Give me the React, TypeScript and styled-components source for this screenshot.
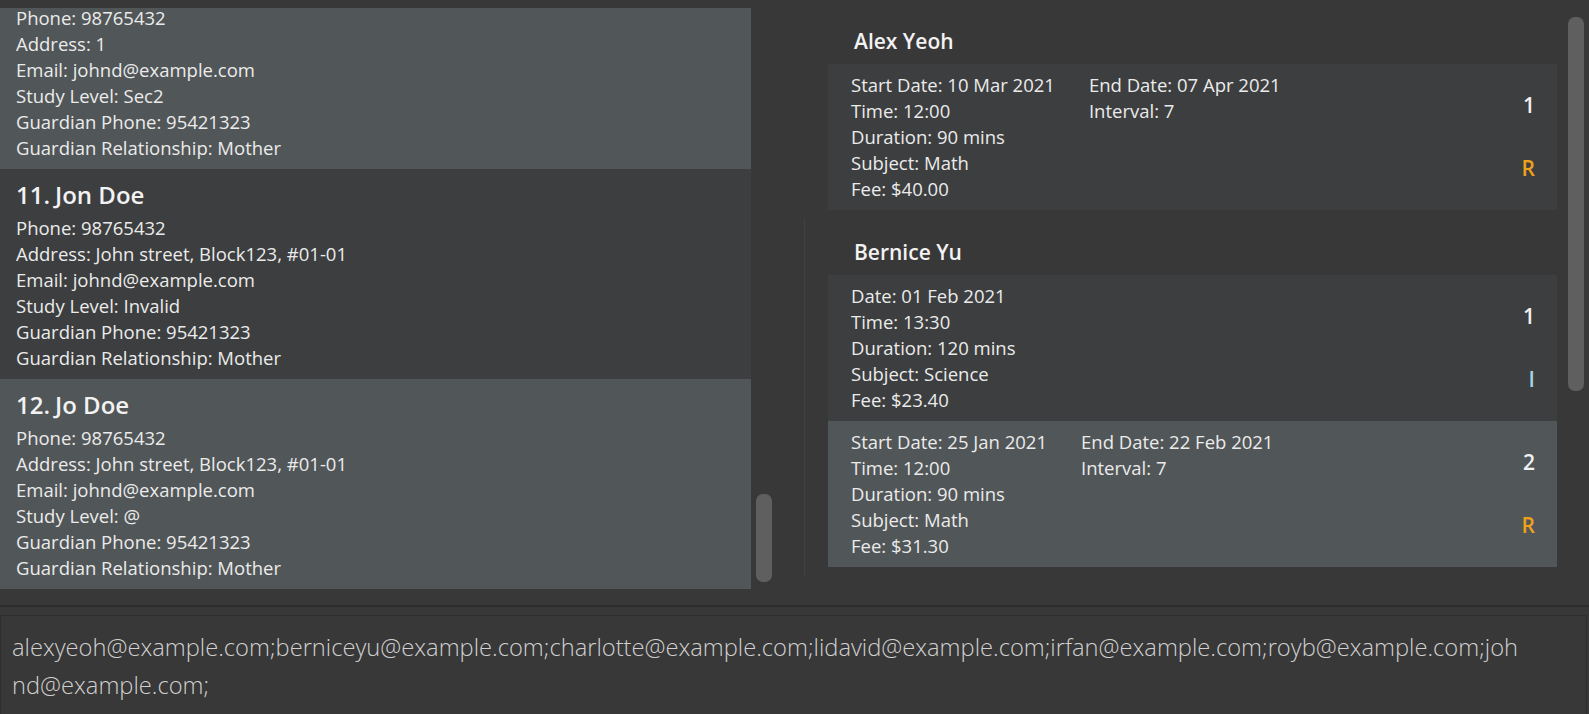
import * as React from 'react'
import styled, { createGlobalStyle } from 'styled-components'

const GlobalStyle = createGlobalStyle`
  html, body {
    margin: 0;
    padding: 0;
    background: #383838;
  }
  body {
    font-family: 'Open Sans', 'Noto Sans', sans-serif;
    color: #ececec;
    overflow: hidden;
  }
`

const Window = styled.div`
  height: 714px;
  display: flex;
  flex-direction: column;
  background: #383838;
`

const Main = styled.div`
  display: flex;
  height: 605px;
  padding-top: 8px;
  box-sizing: border-box;
`

const LeftPane = styled.div`
  display: flex;
  width: 804px;
  flex-shrink: 0;
`

const PersonList = styled.div`
  width: 751px;
  overflow: hidden;
  display: flex;
  flex-direction: column;
`

const PersonCard = styled.div<{ $odd: boolean; $clipped?: boolean }>`
  background: ${p => (p.$odd ? '#515658' : '#3c3e3f')};
  padding: ${p => (p.$clipped ? '0' : '10px')} 16px 8px 16px;
  margin-top: ${p => (p.$clipped ? '-3px' : '0')};
  flex-shrink: 0;
`

const PersonName = styled.div`
  display: flex;
  font-size: 24px;
  font-weight: 600;
  line-height: 32px;
  margin-bottom: 4px;
  color: #f2f2f2;
`

const Index = styled.span`
  width: 39px;
`

const Field = styled.div`
  font-size: 18.5px;
  line-height: 26px;
  color: #ebebeb;
  white-space: nowrap;
`

const ScrollTrack = styled.div<{ $left: number }>`
  width: 16px;
  margin-left: ${p => p.$left}px;
  flex-shrink: 0;
`

const Thumb = styled.div<{ $top: number; $height: number }>`
  margin-top: ${p => p.$top}px;
  height: ${p => p.$height}px;
  border-radius: 7px;
  background: #5f5f5f;
`

const RightPane = styled.div`
  flex: 1;
  display: flex;
  padding-right: 5px;
`

const LessonList = styled.div`
  flex: 1;
  display: flex;
  flex-direction: column;
`

const Group = styled.div<{ $divider?: boolean }>`
  padding: 0 5px 9px 23px;
  border-left: 1px solid ${p => (p.$divider ? '#414141' : 'transparent')};
`

const GroupTitle = styled.div`
  font-size: 21px;
  font-weight: 600;
  line-height: 28px;
  padding: 19px 0 9px 26px;
  color: #f2f2f2;
`

const LessonCard = styled.div<{ $odd: boolean }>`
  display: flex;
  background: ${p => (p.$odd ? '#515658' : '#3c3e3f')};
  padding: 8px 22px 8px 23px;
`

const Columns = styled.div`
  flex: 1;
  display: flex;
  gap: 34px;
`

const Side = styled.div`
  display: flex;
  flex-direction: column;
  justify-content: space-between;
  align-items: flex-end;
  padding: 19px 0 20px;
`

const SideText = styled.div<{ $kind?: 'R' | 'I' }>`
  font-size: 21px;
  font-weight: 600;
  line-height: 28px;
  color: ${p => (p.$kind === 'R' ? '#eea21c' : p.$kind === 'I' ? '#a9d3e3' : '#f0f0f0')};
`

const Divider = styled.div`
  height: 2px;
  background: #2c2c2c;
  margin-bottom: 8px;
`

const ResultBox = styled.div`
  flex: 1;
  margin-right: 2px;
  border: 1px solid #2e2e2e;
  border-bottom: none;
  padding: 12px 11px 0;
  font-size: 23.7px;
  font-weight: 300;
  line-height: 38px;
  color: #d0d0d0;
  white-space: nowrap;
`

type Person = {
  index: number
  name?: string
  fields: string[]
}

const persons: Person[] = [
  {
    index: 10,
    fields: [
      'Phone: 98765432',
      'Address: 1',
      'Email: johnd@example.com',
      'Study Level: Sec2',
      'Guardian Phone: 95421323',
      'Guardian Relationship: Mother',
    ],
  },
  {
    index: 11,
    name: 'Jon Doe',
    fields: [
      'Phone: 98765432',
      'Address: John street, Block123, #01-01',
      'Email: johnd@example.com',
      'Study Level: Invalid',
      'Guardian Phone: 95421323',
      'Guardian Relationship: Mother',
    ],
  },
  {
    index: 12,
    name: 'Jo Doe',
    fields: [
      'Phone: 98765432',
      'Address: John street, Block123, #01-01',
      'Email: johnd@example.com',
      'Study Level: @',
      'Guardian Phone: 95421323',
      'Guardian Relationship: Mother',
    ],
  },
]

type Lesson = {
  main: string[]
  extra?: string[]
  kind: 'R' | 'I'
}

const groups: { student: string; lessons: Lesson[] }[] = [
  {
    student: 'Alex Yeoh',
    lessons: [
      {
        main: ['Start Date: 10 Mar 2021', 'Time: 12:00', 'Duration: 90 mins', 'Subject: Math', 'Fee: $40.00'],
        extra: ['End Date: 07 Apr 2021', 'Interval: 7'],
        kind: 'R',
      },
    ],
  },
  {
    student: 'Bernice Yu',
    lessons: [
      {
        main: ['Date: 01 Feb 2021', 'Time: 13:30', 'Duration: 120 mins', 'Subject: Science', 'Fee: $23.40'],
        kind: 'I',
      },
      {
        main: ['Start Date: 25 Jan 2021', 'Time: 12:00', 'Duration: 90 mins', 'Subject: Math', 'Fee: $31.30'],
        extra: ['End Date: 22 Feb 2021', 'Interval: 7'],
        kind: 'R',
      },
    ],
  },
]

const emails = [
  'alexyeoh@example.com;berniceyu@example.com;charlotte@example.com;lidavid@example.com;irfan@example.com;royb@example.com;joh',
  'nd@example.com;',
]

const App: React.FC = () => {
  return (
    <Window>
      <GlobalStyle />
      <Main>
        <LeftPane>
          <PersonList>
            {persons.map(p => (
              <PersonCard key={p.index} $odd={p.index % 2 === 0} $clipped={!p.name}>
                {p.name && (
                  <PersonName>
                    <Index>{p.index}.</Index>
                    <span>{p.name}</span>
                  </PersonName>
                )}
                {p.fields.map(f => (
                  <Field key={f}>{f}</Field>
                ))}
              </PersonCard>
            ))}
          </PersonList>
          <ScrollTrack $left={5}>
            <Thumb $top={486} $height={88} />
          </ScrollTrack>
        </LeftPane>
        <RightPane>
          <LessonList>
            {groups.map((g, gi) => (
              <Group key={g.student} $divider={gi > 0}>
                <GroupTitle>{g.student}</GroupTitle>
                {g.lessons.map((l, li) => (
                  <LessonCard key={li} $odd={li % 2 === 1}>
                    <Columns>
                      <div>
                        {l.main.map(f => (
                          <Field key={f}>{f}</Field>
                        ))}
                      </div>
                      {l.extra && (
                        <div>
                          {l.extra.map(f => (
                            <Field key={f}>{f}</Field>
                          ))}
                        </div>
                      )}
                    </Columns>
                    <Side>
                      <SideText>{li + 1}</SideText>
                      <SideText $kind={l.kind}>{l.kind}</SideText>
                    </Side>
                  </LessonCard>
                ))}
              </Group>
            ))}
          </LessonList>
          <ScrollTrack $left={6}>
            <Thumb $top={9} $height={374} />
          </ScrollTrack>
        </RightPane>
      </Main>
      <Divider />
      <ResultBox>
        {emails.map(line => (
          <div key={line}>{line}</div>
        ))}
      </ResultBox>
    </Window>
  )
}

export default App
